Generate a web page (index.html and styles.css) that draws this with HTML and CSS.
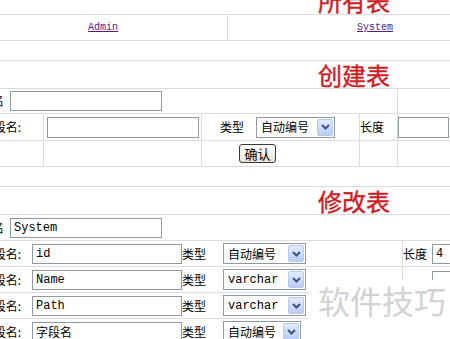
FILE: index.html
```html
<!DOCTYPE html>
<html lang="zh-CN">
<head>
  <meta charset="UTF-8">
  <title>表管理</title>
  <link rel="stylesheet" href="styles.css">
</head>
<body>
  <div class="page">
    <!-- 所有表 -->
    <div class="section">
      <div class="title">所有表</div>
      <div class="row row-links">
        <div class="cell cell-admin"><a href="#">Admin</a></div>
        <div class="cell cell-system"><a href="#">System</a></div>
      </div>
    </div>

    <!-- 创建表 -->
    <div class="section">
      <div class="title">创建表</div>
      <div class="row row-a">
        <div class="cell c-wide">
          <span class="label label-table">表名</span>
          <input type="text" class="box box-table">
        </div>
        <div class="cell c5"></div>
      </div>
      <div class="row row-b">
        <div class="cell c1 right"><span class="label">字段名:</span></div>
        <div class="cell c2"><input type="text" class="box box-field"></div>
        <div class="cell c3 pad-type">
          <span class="label">类型</span>
          <div class="select select-create">
            <span class="select-text">自动编号</span>
            <span class="select-btn"><svg width="9" height="6" viewBox="0 0 9 6"><path d="M1 1 L4.5 4.5 L8 1" fill="none" stroke="#3d5580" stroke-width="2"/></svg></span>
          </div>
        </div>
        <div class="cell c4"><span class="label">长度</span></div>
        <div class="cell c5"><input type="text" class="box box-len"></div>
      </div>
      <div class="row row-c">
        <div class="cell c1"></div>
        <div class="cell c2"></div>
        <div class="cell c3 pad-btn"><button class="btn">确认</button></div>
        <div class="cell c4"></div>
        <div class="cell c5"></div>
      </div>
    </div>

    <!-- 修改表 -->
    <div class="section">
      <div class="title">修改表</div>
      <div class="row row-d">
        <div class="cell c-full">
          <span class="label label-table">表名</span>
          <input type="text" class="box box-table" value="System">
        </div>
      </div>
      <div class="row row-d">
        <div class="cell c-field">
          <span class="label field-name">字段名:</span>
          <input type="text" class="box box-edit" value="id">
          <span class="label field-type">类型</span>
          <div class="select select-edit">
            <span class="select-text">自动编号</span>
            <span class="select-btn"><svg width="9" height="6" viewBox="0 0 9 6"><path d="M1 1 L4.5 4.5 L8 1" fill="none" stroke="#3d5580" stroke-width="2"/></svg></span>
          </div>
        </div>
        <div class="cell c-len">
          <span class="label field-len">长度</span>
          <input type="text" class="box box-len2" value="4">
        </div>
      </div>
      <div class="row row-d">
        <div class="cell c-field">
          <span class="label field-name">字段名:</span>
          <input type="text" class="box box-edit" value="Name">
          <span class="label field-type">类型</span>
          <div class="select select-edit">
            <span class="select-text mono">varchar</span>
            <span class="select-btn"><svg width="9" height="6" viewBox="0 0 9 6"><path d="M1 1 L4.5 4.5 L8 1" fill="none" stroke="#3d5580" stroke-width="2"/></svg></span>
          </div>
        </div>
        <div class="cell c-len">
          <span class="field-len"></span>
          <input type="text" class="box box-len2 box-low">
        </div>
      </div>
      <div class="row row-d">
        <div class="cell c-field">
          <span class="label field-name">字段名:</span>
          <input type="text" class="box box-edit" value="Path">
          <span class="label field-type">类型</span>
          <div class="select select-edit">
            <span class="select-text mono">varchar</span>
            <span class="select-btn"><svg width="9" height="6" viewBox="0 0 9 6"><path d="M1 1 L4.5 4.5 L8 1" fill="none" stroke="#3d5580" stroke-width="2"/></svg></span>
          </div>
        </div>
        <div class="cell c-len"></div>
      </div>
      <div class="row row-d">
        <div class="cell c-field">
          <span class="label field-name">字段名:</span>
          <input type="text" class="box box-edit" value="字段名">
          <span class="label field-type">类型</span>
          <div class="select select-last">
            <span class="select-text">自动编号</span>
            <span class="select-btn"><svg width="9" height="6" viewBox="0 0 9 6"><path d="M1 1 L4.5 4.5 L8 1" fill="none" stroke="#3d5580" stroke-width="2"/></svg></span>
          </div>
        </div>
        <div class="cell c-len"></div>
      </div>
    </div>
  </div>

  <div class="watermark">软件技巧</div>
</body>
</html>
```

FILE: styles.css
```css
body {
  margin: 0;
  background: #fff;
  overflow: hidden;
  font-family: "Noto Sans CJK SC", "Liberation Sans", sans-serif;
  font-size: 12px;
  color: #000;
}

.page {
  width: 552px;
  margin: -14px 0 0 -30px;
}

.section {
  border-top: 1px solid #dcdcdc;
  margin-bottom: 19px;
}

.title {
  height: 27px;
  line-height: 27px;
  border-bottom: 1px solid #dcdcdc;
  text-align: right;
  padding-right: 132px;
  font-size: 24px;
  color: #cf1a1f;
  -webkit-text-stroke: 0.4px #cf1a1f;
}

.row {
  display: flex;
  border-bottom: 1px solid #dcdcdc;
}

.row-links { height: 25px; }
.row-a { height: 24px; }
.row-b { height: 26px; }
.row-c { height: 25px; }
.row-d { height: 25px; }

.cell {
  box-sizing: border-box;
  display: flex;
  align-items: center;
  border-right: 1px solid #dcdcdc;
}

.cell-admin {
  width: 258px;
  padding-left: 9px;
  justify-content: center;
}

.cell-system {
  width: 294px;
  justify-content: center;
  border-right: none;
}

.row-links a {
  font-family: "Liberation Mono", monospace;
  font-size: 10px;
  color: #551a8b;
}

.c1 { width: 74px; }
.c2 { width: 158px; }
.c3 { width: 158px; }
.c4 { width: 38px; }
.c5 { flex: 1; border-right: none; }
.c-wide { width: 428px; padding-left: 10px; }
.c-full { flex: 1; border-right: none; padding-left: 10px; }
.c-field { width: 433px; }
.c-len { flex: 1; border-right: none; }

.right {
  justify-content: flex-end;
  padding-right: 22px;
}

.label {
  white-space: nowrap;
  line-height: 16px;
}

.label-table { width: 24px; margin-right: 6px; }

.pad-type { padding-left: 18px; }
.pad-btn { padding-left: 37px; }

.field-name {
  width: 51px;
  text-align: right;
  margin-right: 11px;
}

.field-type { width: 41px; }
.field-len { width: 29px; flex: none; }

.box {
  box-sizing: border-box;
  border: 1px solid #8d9aa4;
  background: #fff;
  margin: 0;
  padding: 0 3px;
  font-family: "Liberation Mono", "Noto Sans CJK SC", monospace;
  font-size: 12px;
  color: #000;
  outline: none;
}

.box-table { width: 152px; height: 20px; }
.box-field { width: 152px; height: 21px; margin-left: 3px; }
.box-len { width: 51px; height: 21px; }
.box-edit { width: 150px; height: 20px; }
.box-len2 { width: 60px; height: 20px; }
.box-low { align-self: flex-end; height: 22px; margin-bottom: -1px; }

.select {
  box-sizing: border-box;
  display: flex;
  align-items: center;
  justify-content: space-between;
  border: 1px solid #8d9aa4;
  background: #fff;
  padding: 1px;
}

.select-create { width: 79px; height: 21px; margin-left: 12px; }
.select-edit { width: 83px; height: 21px; }
.select-last { width: 78px; height: 21px; }

.select-text {
  padding-left: 3px;
  white-space: nowrap;
  line-height: 16px;
}

.mono {
  font-family: "Liberation Mono", monospace;
  font-size: 12px;
}

.select-btn {
  box-sizing: border-box;
  width: 16px;
  height: 17px;
  display: flex;
  align-items: center;
  justify-content: center;
  border: 1px solid #b8c9ef;
  border-radius: 2px;
  background: linear-gradient(#e2eafd, #b9cdf7);
}

.btn {
  box-sizing: border-box;
  width: 37px;
  height: 19px;
  padding: 0;
  border: 1px solid #3a3a3a;
  border-radius: 3px;
  background: linear-gradient(#ffffff, #e6e3d6);
  font-family: "Noto Sans CJK SC", sans-serif;
  font-size: 13px;
  line-height: 16px;
  color: #000;
}

.watermark {
  position: absolute;
  left: 308px;
  top: 280px;
  right: 0;
  bottom: 0;
  background: #fff;
  padding: 2px 0 0 10px;
  font-size: 32px;
  line-height: 36px;
  color: #d2d2d2;
  white-space: nowrap;
}
```
